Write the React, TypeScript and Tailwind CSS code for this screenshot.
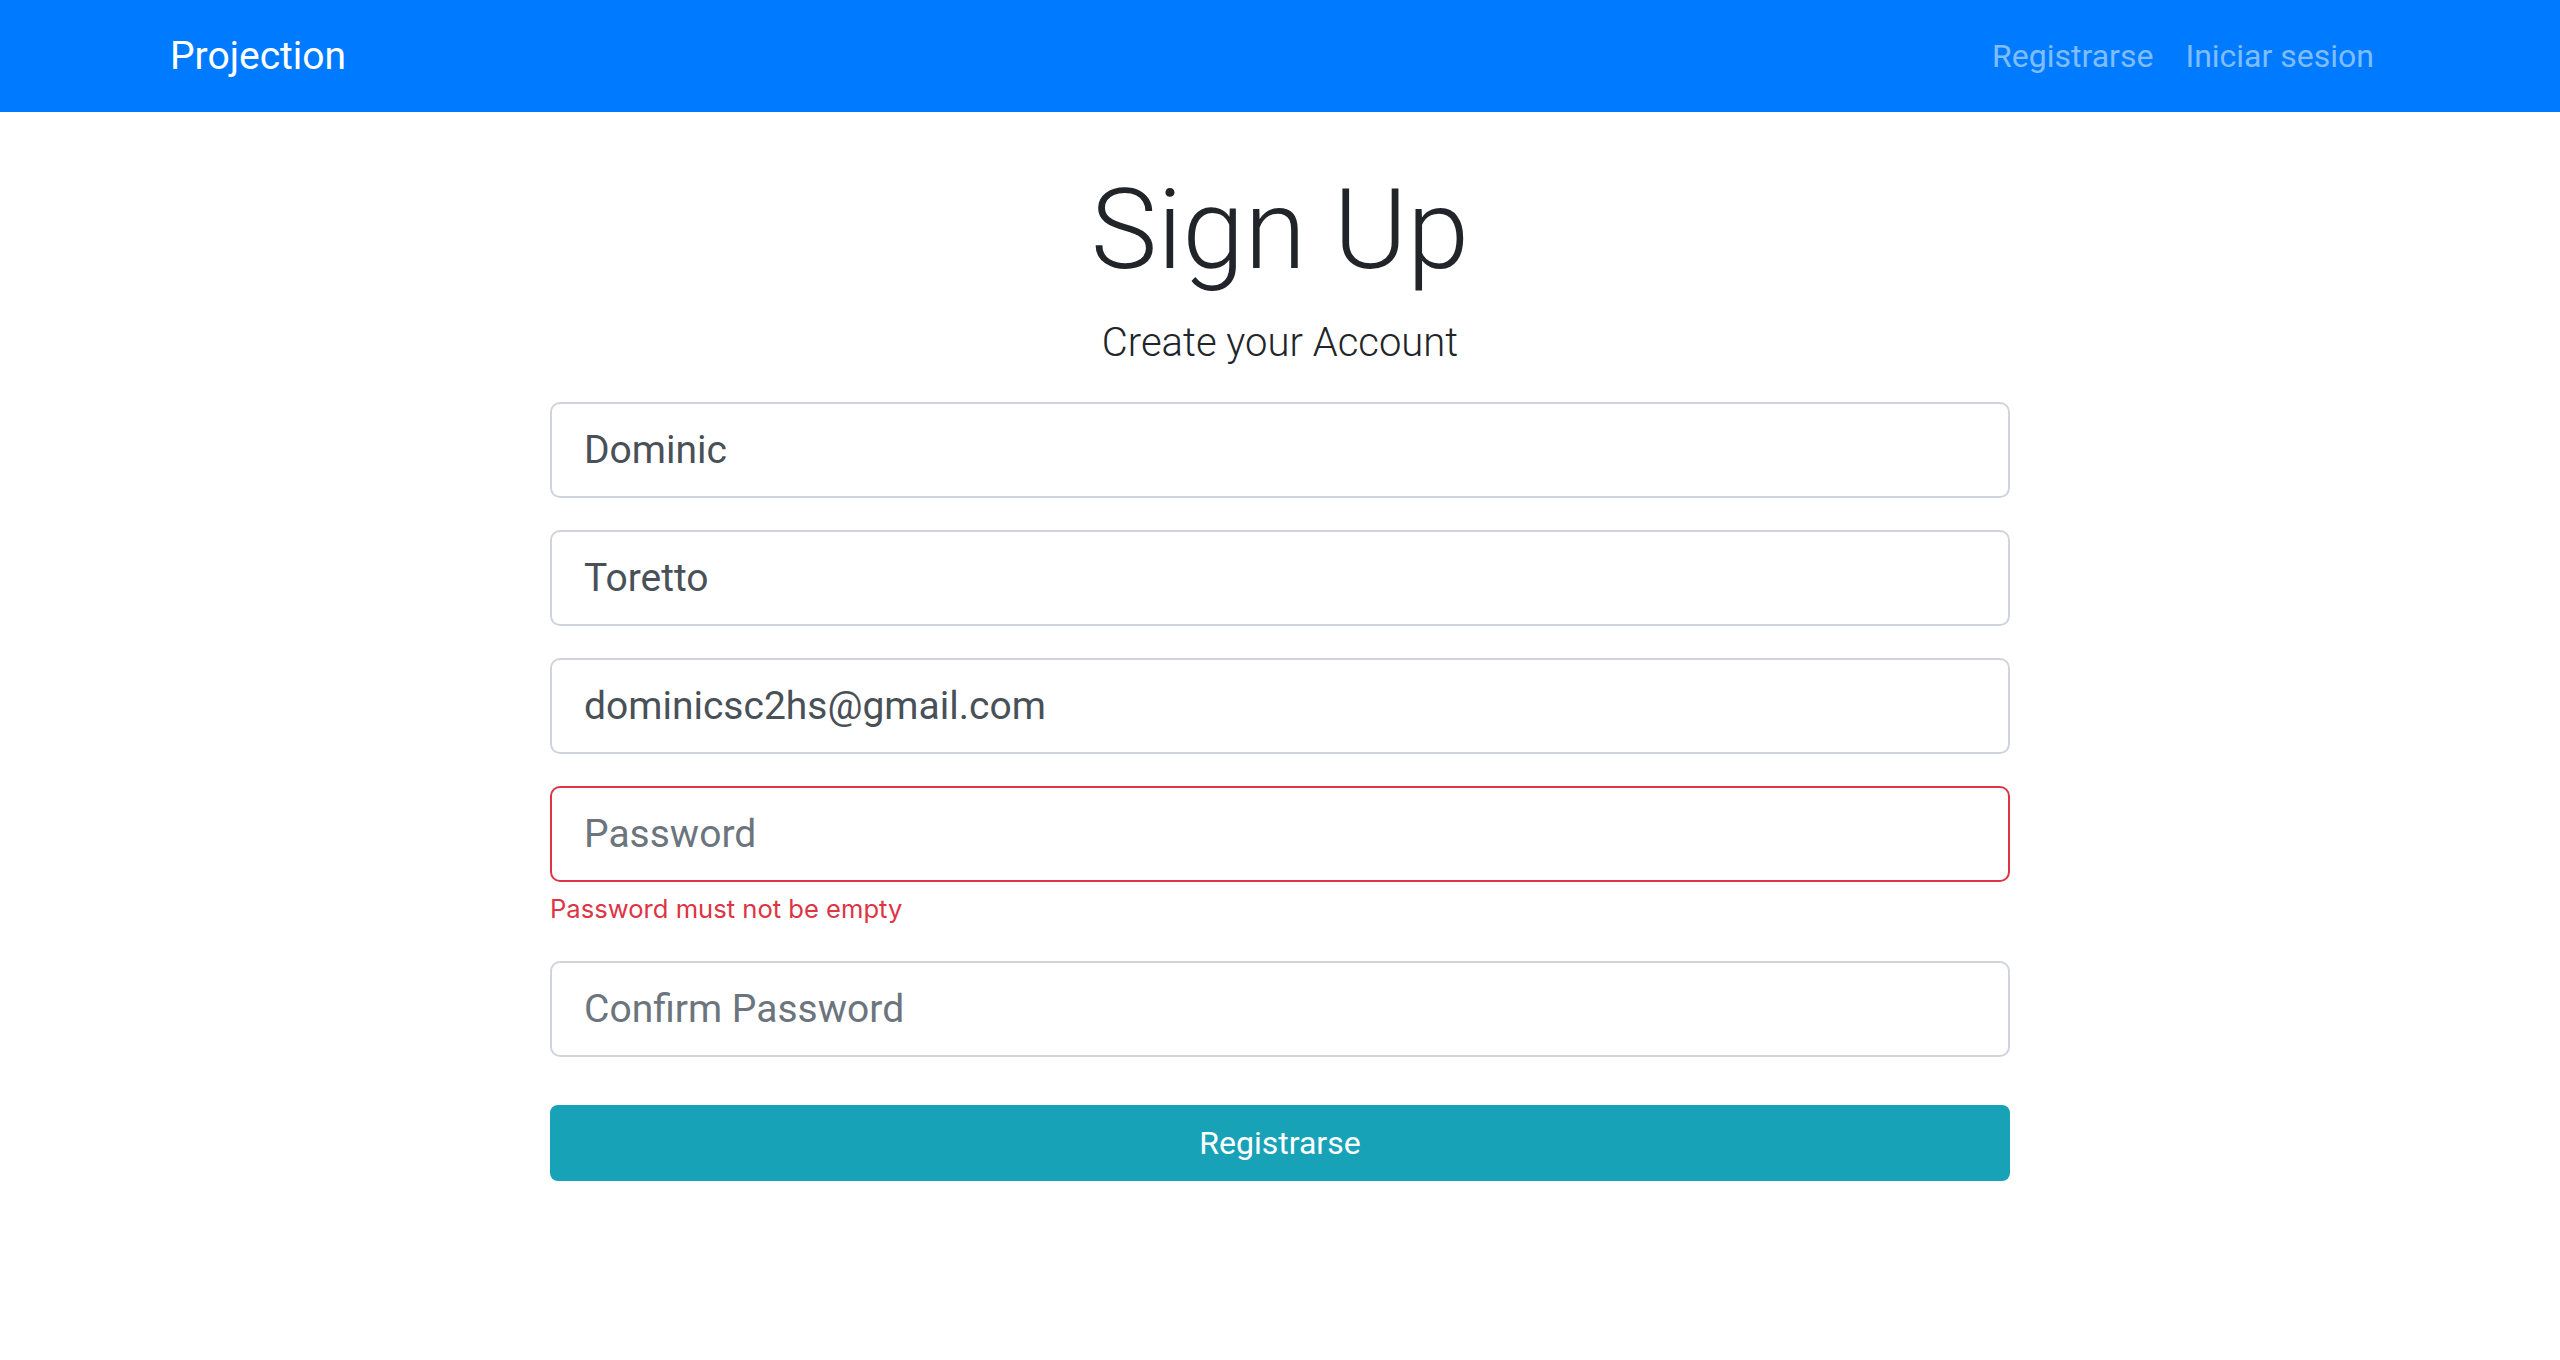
export default function App() {
  const inputs = [
    { value: 'Dominic', placeholder: 'First Name' },
    { value: 'Toretto', placeholder: 'Last Name' },
    { value: 'dominicsc2hs@gmail.com', placeholder: 'Email' },
  ];

  return (
    <div className="min-h-screen bg-white font-['Roboto','Liberation_Sans',sans-serif] text-[#212529]">
      {/* navbar */}
      <nav className="h-[112px] bg-[#007bff]">
        <div className="mx-auto flex h-full w-[2220px] items-center justify-between">
          <a className="text-[39px] leading-[1.5] text-white">Projection</a>
          <div className="flex items-center">
            <a className="px-[16px] text-[32px] leading-[1.5] text-[#80bdff]">Registrarse</a>
            <a className="px-[16px] text-[32px] leading-[1.5] text-[#80bdff]">Iniciar sesion</a>
          </div>
        </div>
      </nav>

      {/* form */}
      <div className="mx-auto w-[1460px] pt-[51px]">
        <h1 className="text-center text-[112px] font-light leading-[1.2]">Sign Up</h1>
        <p className="mt-[16px] text-center text-[40px] font-light leading-[1.5]">Create your Account</p>

        <form className="mt-[29px] flex flex-col">
          {inputs.map((f) => (
            <input
              key={f.value}
              defaultValue={f.value}
              placeholder={f.placeholder}
              className="mb-[32px] h-[96px] w-full rounded-[10px] border-2 border-[#ced4da] px-[32px] text-[39px] text-[#495057] outline-none placeholder:text-[#6c757d]"
            />
          ))}

          <div className="mb-[32px]">
            <input
              type="password"
              placeholder="Password"
              className="h-[96px] w-full rounded-[10px] border-2 border-[#dc3545] px-[32px] text-[39px] text-[#495057] outline-none placeholder:text-[#6c757d]"
            />
            <div className="mt-[8px] font-['Inter',sans-serif] text-[25.6px] leading-[1.5] text-[#dc3545]">
              Password must not be empty
            </div>
          </div>

          <input
            type="password"
            placeholder="Confirm Password"
            className="mb-[32px] h-[96px] w-full rounded-[10px] border-2 border-[#ced4da] px-[32px] text-[39px] text-[#495057] outline-none placeholder:text-[#6c757d]"
          />

          <button
            type="button"
            className="mt-[16px] h-[76px] w-full rounded-[8px] bg-[#17a2b8] text-[32px] text-white"
          >
            Registrarse
          </button>
        </form>
      </div>
    </div>
  );
}
